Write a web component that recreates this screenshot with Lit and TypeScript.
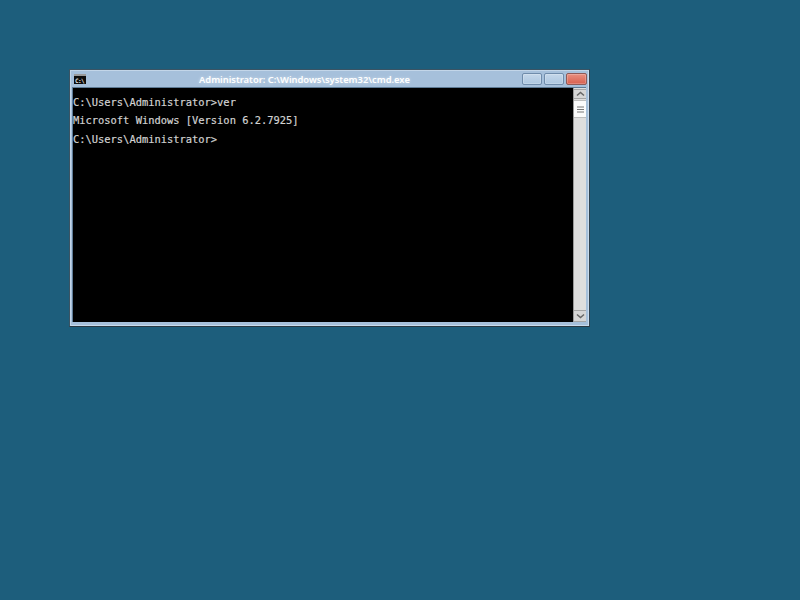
import { LitElement, html, css } from "lit";
import { customElement } from "lit/decorators.js";

@customElement("app-root")
export class AppRoot extends LitElement {
  static styles = css`
    :host { display: block; position: relative; width: 800px; height: 600px; background: #1d5e7c; overflow: hidden; }
    .win { position: absolute; left: 69px; top: 69px; width: 521px; height: 258px; box-sizing: border-box;
      border: 1px solid #3a5464; border-right-color: #2f4250; border-bottom-color: #2a3943; background: #a6c0db; display: flex; flex-direction: column;
      box-shadow: inset 1px 1px 0 #c3d6e9, inset -1px -1px 0 #c9dbec; padding: 1px 3px 4px 2px; }
    .title { height: 16px; flex: none; display: flex; align-items: center; position: relative; }
    .icon { margin: 0 0 0 2px; width: 12px; height: 8px; background: #0c0c0c; border-top: 2px solid #9a9a9a; display: flex; align-items: center; overflow: hidden; }
    .icon span { font: bold 6px/7px "DejaVu Sans Mono", monospace; color: #e8e8e8; margin-left: 1px; letter-spacing: -0.6px; }
    .cap { position: absolute; left: 127px; top: 0; font: 600 9.36px/18px "Noto Sans", sans-serif; color: #fff; text-shadow: 0 0 3px rgba(255,255,255,.55); white-space: nowrap; }
    .btns { position: absolute; right: -1px; top: 2px; display: flex; gap: 2px; }
    .btn { width: 18px; height: 10px; border: 1px solid #6f8cab; border-radius: 2px; background: linear-gradient(#c4d7ea, #adc7e0); box-shadow: inset 0 0 0 1px rgba(255,255,255,.22); }
    .btn.close { width: 19px; border-color: #8d5a58; background: linear-gradient(#e88f80, #d8604f); }
    .body { flex: 1; display: flex; min-height: 0; border-top: 1px solid #5d7a94; border-left: 1px solid #5d7a94; }
    .term { flex: 1; background: #000; color: #d2d2d2; font: 10.42px/9.2px "DejaVu Sans Mono", monospace; -webkit-text-stroke: 0.2px #d2d2d2; padding: 10px 0 0 0; white-space: pre; margin: 0; }
    .sb { width: 13px; flex: none; background: #dedede; display: flex; flex-direction: column; box-sizing: border-box; border-left: 1px solid #9a9a9a; }
    .arrow { background: #d6d6d6; border: 1px solid #a5a5a5; border-width: 1px 0; display: flex; align-items: center; justify-content: center; box-sizing: border-box; }
    .arrow.up { height: 10px; margin: 1px 0; }
    .arrow.down { height: 12px; }
    .thumb { height: 18px; background: #fbfbfb; border: 1px solid #bdbdbd; border-width: 1px 0; display: flex; align-items: center; justify-content: center; box-sizing: border-box; }
    .track { flex: 1; }
    svg { display: block; }
  `;
  render() {
    return html`<div class="win">
      <div class="title">
        <div class="icon"><span>C:\\</span></div>
        <div class="cap">Administrator: C:\\Windows\\system32\\cmd.exe</div>
        <div class="btns"><div class="btn"></div><div class="btn"></div><div class="btn close"></div></div>
      </div>
      <div class="body">
        <pre class="term">C:\\Users\\Administrator>ver

Microsoft Windows [Version 6.2.7925]

C:\\Users\\Administrator></pre>
        <div class="sb">
          <div class="arrow up"><svg width="9" height="6"><path d="M1 4.5 L4.5 1.5 L8 4.5" fill="none" stroke="#666" stroke-width="1.5"/></svg></div>
          <div class="thumb"><svg width="7" height="7"><path d="M0 1h7M0 3.5h7M0 6h7" stroke="#777" stroke-width="1"/></svg></div>
          <div class="track"></div>
          <div class="arrow down"><svg width="9" height="6"><path d="M1 1.5 L4.5 4.5 L8 1.5" fill="none" stroke="#666" stroke-width="1.5"/></svg></div>
        </div>
      </div>
    </div>`;
  }
}
